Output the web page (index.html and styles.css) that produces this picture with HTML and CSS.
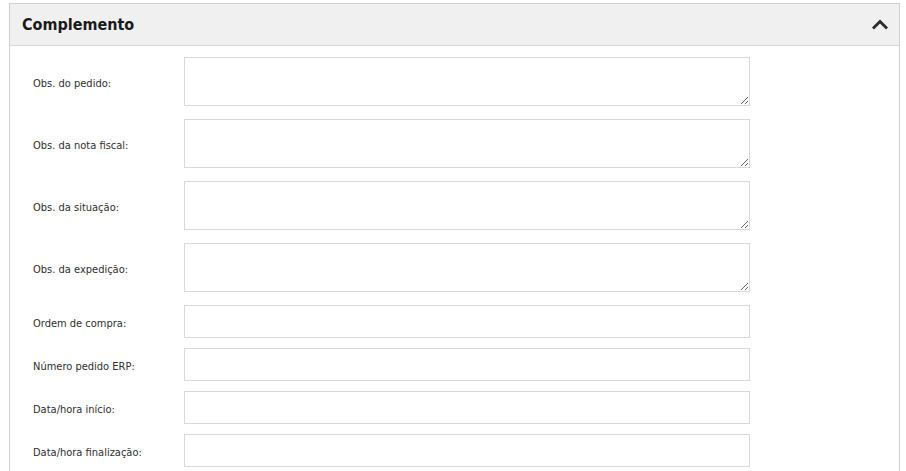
FILE: index.html
```html
<!DOCTYPE html>
<html lang="pt">
<head>
<meta charset="utf-8">
<title>Complemento</title>
<link rel="stylesheet" href="styles.css">
</head>
<body>
<section class="panel">
  <header class="panel-head">
    <h2 class="panel-title">Complemento</h2>
    <svg class="chevron" width="18" height="11" viewBox="0 0 18 11"><path d="M2 9.5 L9 2.5 L16 9.5" fill="none" stroke="#2b2b2b" stroke-width="2.8"/></svg>
  </header>
  <div class="panel-body">
    <div class="group group-area">
      <div class="row"><label class="lbl">Obs. do pedido:</label><textarea class="field area"></textarea></div>
      <div class="row"><label class="lbl">Obs. da nota fiscal:</label><textarea class="field area"></textarea></div>
      <div class="row"><label class="lbl">Obs. da situação:</label><textarea class="field area"></textarea></div>
      <div class="row"><label class="lbl">Obs. da expedição:</label><textarea class="field area"></textarea></div>
    </div>
    <div class="group group-input">
      <div class="row"><label class="lbl">Ordem de compra:</label><input class="field input" type="text"></div>
      <div class="row"><label class="lbl">Número pedido ERP:</label><input class="field input" type="text"></div>
      <div class="row"><label class="lbl">Data/hora início:</label><input class="field input" type="text"></div>
      <div class="row"><label class="lbl">Data/hora finalização:</label><input class="field input" type="text"></div>
    </div>
  </div>
</section>
</body>
</html>
```

FILE: styles.css
```css
html, body {
  background: #ffffff;
}
body {
  margin: 3px 6px 0 9px;
  font-family: "Liberation Sans", Arial, sans-serif;
  color: #333;
}
.panel {
  border: 1px solid #cfcfcf;
  box-shadow: 0 0 2px 1px rgba(0,0,0,0.12);
  background: #fff;
  height: 480px;
}
.panel-head {
  display: flex;
  align-items: center;
  justify-content: space-between;
  height: 41px;
  background: #f0f0f0;
  border-bottom: 1px solid #d6d6d6;
  padding: 0 10px 0 12px;
}
.panel-title {
  margin: 0;
  font-family: "DejaVu Sans Condensed", "DejaVu Sans", sans-serif;
  font-size: 16px;
  font-weight: bold;
  color: #1a1a1a;
}
.chevron {
  display: block;
}
.panel-body {
  padding: 11px 0 0 23px;
  display: flex;
  flex-direction: column;
  gap: 13px;
}
.group {
  display: flex;
  flex-direction: column;
}
.group-area {
  gap: 13px;
}
.group-input {
  gap: 10px;
}
.row {
  display: flex;
  align-items: center;
}
.lbl {
  width: 151px;
  font-family: "DejaVu Sans Condensed", "DejaVu Sans", sans-serif;
  font-size: 11px;
  color: #2e2e2e;
  padding-top: 3px;
}
.field {
  box-sizing: border-box;
  width: 566px;
  border: 1px solid #d9d9d9;
  background: #fff;
  margin: 0;
  font-family: inherit;
}
.area {
  height: 49px;
  resize: vertical;
  display: block;
}
.input {
  height: 33px;
  display: block;
}
```
